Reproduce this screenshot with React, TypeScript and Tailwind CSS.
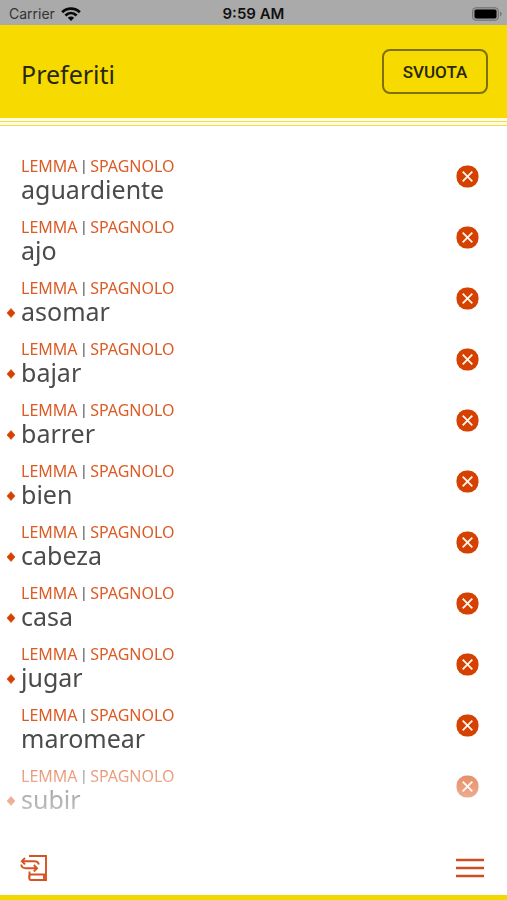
type Entry = { word: string; marked: boolean };

const entries: Entry[] = [
  { word: "aguardiente", marked: false },
  { word: "ajo", marked: false },
  { word: "asomar", marked: true },
  { word: "bajar", marked: true },
  { word: "barrer", marked: true },
  { word: "bien", marked: true },
  { word: "cabeza", marked: true },
  { word: "casa", marked: true },
  { word: "jugar", marked: true },
  { word: "maromear", marked: false },
  { word: "subir", marked: true },
];

function StatusBar() {
  return (
    <div className="grid h-[25px] grid-cols-3 items-center bg-[#aaaaaa] px-1 pt-0.5 font-['Inter','Liberation_Sans',sans-serif] leading-5 text-[#111111]">
      <div className="flex items-center gap-[6px] pl-[5px]">
        <span className="text-[14px] text-[#333333]">Carrier</span>
        <svg width="20" height="14" viewBox="0 0 20 14" fill="none" stroke="#080808" strokeWidth="2.8" aria-hidden="true">
          <path d="M1.2 5.2C6 .3 14 .3 18.8 5.2" />
          <path d="M4.4 8.4C7.7 5.3 12.3 5.3 15.6 8.4" />
          <path d="M10 14 6.8 10.8C8.6 9 11.4 9 13.2 10.8Z" fill="#080808" stroke="none" />
        </svg>
      </div>
      <span className="text-center text-[15px] font-semibold whitespace-nowrap">9:59 AM</span>
      <svg className="justify-self-end" width="32" height="14" viewBox="0 0 32 14" aria-hidden="true">
        <rect x="1.5" y=".7" width="26" height="12.6" rx="3.5" fill="#999" stroke="#747474" />
        <rect x="3.5" y="2.5" width="22" height="9" rx="1.8" fill="#000" />
        <path d="M29 4.8c2.2.7 2.2 3.7 0 4.4Z" fill="#747474" />
      </svg>
    </div>
  );
}

function EntryRow({ word, marked }: Entry) {
  return (
    <li className="flex h-[61px] items-start pr-7">
      <span className="flex w-[21px] shrink-0 justify-center pt-[29px]">
        {marked && (
          <svg width="10" height="12" viewBox="0 0 10 12" aria-hidden="true">
            <path d="M5 1.500 9 6 5 10.500 1 6Z" fill="#d54100" stroke="#d54100" strokeWidth=".6" strokeLinejoin="round" />
          </svg>
        )}
      </span>
      <div className="min-w-0 flex-1">
        <p className="text-[16px] leading-5 text-[#dc5b25]">
          LEMMA<span className="font-['Roboto',sans-serif] text-[17px] text-[#666666]"> | </span>SPAGNOLO
        </p>
        <p className="text-[25px] leading-[26px] text-[#4b4b4b]">{word}</p>
      </div>
      <button type="button" aria-label={`Rimuovi ${word}`} className="mt-[9px] shrink-0">
        <svg width="23" height="23" viewBox="0 0 23 23" aria-hidden="true">
          <rect x=".5" y=".5" width="22" height="22" rx="10" fill="#d54100" />
          <path d="m6.700 6.700 9.600 9.600m0-9.600-9.600 9.600" stroke="#fff3ea" strokeWidth="1.9" />
        </svg>
      </button>
    </li>
  );
}

export default function App() {
  return (
    <div className="flex min-h-screen flex-col bg-white font-['Noto_Sans','Open_Sans',sans-serif]">
      <StatusBar />
      <header>
        <div className="flex h-[93px] items-center justify-between bg-[#f6da00] pr-[19px] pl-[21px]">
          <h1 className="pt-1 text-[25px] leading-8 text-[#29270c]">Preferiti</h1>
          <button
            type="button"
            className="h-[45px] w-[106px] rounded-lg border-2 border-[#7d7004] pt-0.5 font-['Roboto',sans-serif] text-[17px] font-medium text-[#29270c]"
          >
            SVUOTA
          </button>
        </div>
        <div className="flex flex-col gap-[3px] bg-[#fffce6] pt-[3px]">
          <div className="h-px bg-[#f3df45]" />
          <div className="h-px bg-[#f3df45]" />
        </div>
      </header>
      <main className="flex-1 pt-[30px]">
        <ul className="[mask-image:linear-gradient(to_bottom,black_calc(100%-72px),rgb(0_0_0/0.6)_calc(100%-54px),rgb(0_0_0/0.38)_calc(100%-20px),transparent)]">
          {entries.map((entry) => (
            <EntryRow key={entry.word} {...entry} />
          ))}
        </ul>
      </main>
      <footer className="flex items-center justify-between border-b-5 border-[#f1d900] pt-[27px] pr-[23px] pb-[13px] pl-[20px]">
        <button type="button" aria-label="Dizionario">
          <svg width="28" height="28" viewBox="0 0 28 28" fill="none" stroke="#d65222" strokeWidth="1.9" aria-hidden="true">
            <path d="M9 2H26V26H11C8.500 26 8.500 20.500 11 20.500H26M9.500 17.500V24M24 20.500V26" />
            <path d="M5 4 1.800 7.200 5 10.400M2 7.200H14C17 7.200 18.500 8.500 18.800 10.500M1.200 10.500C1.500 13 3 14.300 6 14.300H17M13.800 11 17 14.300 13.800 17.500" />
          </svg>
        </button>
        <button type="button" aria-label="Menu">
          <svg width="28" height="28" viewBox="0 0 28 28" stroke="#cf4e20" strokeWidth="2.4" aria-hidden="true">
            <path d="M0 6H28M0 14H28M0 22H28" />
          </svg>
        </button>
      </footer>
    </div>
  );
}
